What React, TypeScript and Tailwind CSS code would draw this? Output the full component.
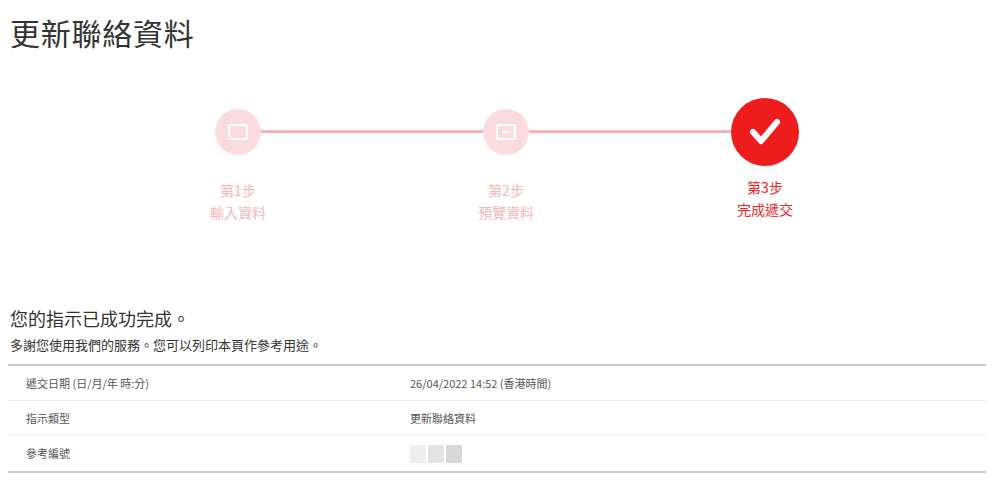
export default function App() {
  const faded = 'w-[46px] h-[46px] rounded-full bg-[#fbdcdc] flex items-center justify-center';
  const rows = [
    ['遞交日期 (日/月/年 時:分)', '26/04/2022 14:52  (香港時間)'],
    ['指示類型', '更新聯絡資料'],
    ['參考編號', ''],
  ];
  return (
    <div className="w-[998px] h-[489px] bg-white overflow-hidden px-[10px]" style={{ fontFamily: '"Noto Sans CJK TC", "Noto Sans", sans-serif' }}>
      <h1 className="pt-[12px] text-[30px] leading-[40px] text-[#333] tracking-wide">更新聯絡資料</h1>
      <div className="mt-[36px] relative ml-[180px] h-[140px]">
        <div className="absolute left-[48px] w-[527px] top-[42px] h-[3px] bg-[#f5b3b5]" />
        <div className="flex items-start relative">
          <div className="flex flex-col items-center w-[96px] pt-[21px]">
            <div className={faded}>
              <div className="w-[20px] h-[16px] border-2 border-white rounded-[2px]" />
            </div>
            <div className="mt-[24px] text-[14px] leading-[22px] text-[#f5b6b8] text-center">第1步<br />輸入資料</div>
          </div>
          <div className="flex flex-col items-center w-[96px] pt-[21px] ml-[172px]">
            <div className={faded}>
              <div className="w-[20px] h-[16px] border-2 border-white rounded-[2px] flex items-center justify-center"><div className="w-[8px] h-[2px] bg-white" /></div>
            </div>
            <div className="mt-[24px] text-[14px] leading-[22px] text-[#f5b6b8] text-center">第2步<br />預覽資料</div>
          </div>
          <div className="flex flex-col items-center w-[96px] pt-[10px] ml-[163px]">
            <div className="w-[68px] h-[68px] rounded-full bg-[#ee1c1c] flex items-center justify-center">
              <svg width="34" height="30" viewBox="0 0 34 30"><path d="M5 15 L13 24 L29 5" stroke="white" strokeWidth="6" fill="none" strokeLinecap="round" strokeLinejoin="round" /></svg>
            </div>
            <div className="mt-[10px] text-[14px] leading-[22px] text-[#e8262a] text-center">第3步<br />完成遞交</div>
          </div>
        </div>
      </div>
      <div className="mt-[78px] text-[18px] leading-[24px] text-[#333]">您的指示已成功完成。</div>
      <div className="mt-[6px] text-[13px] leading-[18px] text-[#333]">多謝您使用我們的服務。您可以列印本頁作參考用途。</div>
      <div className="mt-[10px] border-t-2 border-b-2 border-[#c8c8c8] mr-[2px] -ml-[2px]">
        {rows.map(([k, v], i) => (
          <div key={k} className={`flex h-[35px] items-center text-[11px] text-[#555] ${i < 2 ? 'border-b border-[#ececec]' : ''}`}>
            <div className="w-[402px] pl-[18px]">{k}</div>
            <div>{v || <div className="flex gap-[2px]"><div className="w-[16px] h-[18px] bg-[#eee]" /><div className="w-[16px] h-[18px] bg-[#e3e3e3]" /><div className="w-[16px] h-[18px] bg-[#d8d8d8]" /></div>}</div>
          </div>
        ))}
      </div>
    </div>
  );
}
